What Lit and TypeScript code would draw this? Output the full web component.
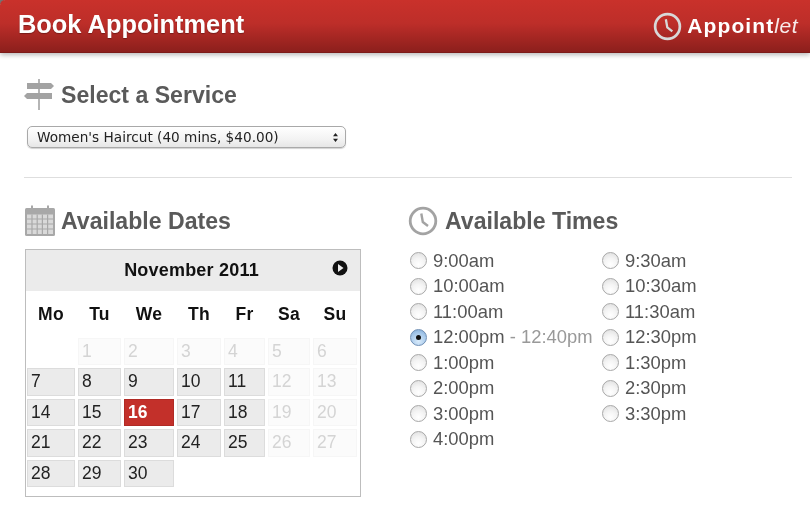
import { LitElement, html, css } from "lit";
import { customElement } from "lit/decorators.js";

const clock = (size: number, color: string) => html`<svg width=${size} height=${size} viewBox="0 0 30 30" fill="none" stroke=${color}>
  <circle cx="15" cy="15" r="12.8" stroke-width="2.8"/>
  <path d="M13.3 7.5 L14.8 16 L20 20" stroke-width="2.4" stroke-linejoin="miter"/>
</svg>`;

const weekdays = ["Mo", "Tu", "We", "Th", "Fr", "Sa", "Su"];
type Day = { n?: number; k: "" | "off" | "on" | "sel" };
const days: Day[] = [
  { k: "" },
  ...[1, 2, 3, 4, 5, 6].map((n) => ({ n, k: "off" as const })),
  ...[7, 8, 9, 10, 11].map((n) => ({ n, k: "on" as const })),
  ...[12, 13].map((n) => ({ n, k: "off" as const })),
  ...[14, 15].map((n) => ({ n, k: "on" as const })),
  { n: 16, k: "sel" },
  ...[17, 18].map((n) => ({ n, k: "on" as const })),
  ...[19, 20].map((n) => ({ n, k: "off" as const })),
  ...[21, 22, 23, 24, 25].map((n) => ({ n, k: "on" as const })),
  ...[26, 27].map((n) => ({ n, k: "off" as const })),
  ...[28, 29, 30].map((n) => ({ n, k: "on" as const })),
];

const times: [string, string?, boolean?][] = [
  ["9:00am"], ["9:30am"],
  ["10:00am"], ["10:30am"],
  ["11:00am"], ["11:30am"],
  ["12:00pm", " - 12:40pm", true], ["12:30pm"],
  ["1:00pm"], ["1:30pm"],
  ["2:00pm"], ["2:30pm"],
  ["3:00pm"], ["3:30pm"],
  ["4:00pm"],
];

@customElement("app-root")
export class AppRoot extends LitElement {
  static styles = css`
    :host {
      display: block;
      width: 810px;
      height: 530px;
      overflow: hidden;
      background: linear-gradient(135deg, #777 3px, #fff 3px);
      font-family: "Liberation Sans", Arial, sans-serif;
      filter: blur(0.45px);
    }
    .top {
      height: 53px;
      box-sizing: border-box;
      background: linear-gradient(#c9312b 0%, #bd2e29 45%, #8c1f1c 100%);
      border-bottom: 1px solid #7c1b18;
      box-shadow: 0 2px 5px rgba(0, 0, 0, 0.28);
      border-top-left-radius: 5px;
      display: flex;
      align-items: center;
      justify-content: space-between;
      padding: 0 12px 3px 18px;
      color: #fff;
    }
    .top h1 {
      margin: 0;
      font-size: 25.4px;
      font-weight: 700;
      text-shadow: 0 1px 1px rgba(0, 0, 0, 0.3);
    }
    .brand {
      display: flex;
      align-items: center;
      gap: 5px;
      font-size: 21px;
      font-weight: 700;
      letter-spacing: 1.1px;
      margin-top: 3px;
    }
    .brand i {
      font-weight: 400;
      letter-spacing: 0.5px;
      opacity: 0.9;
    }
    .content {
      padding: 26px 18px 0 24px;
    }
    h2 {
      margin: 0;
      display: flex;
      align-items: center;
      font-size: 23.1px;
      font-weight: 700;
      color: #5a5a5a;
    }
    .service h2 {
      gap: 6px;
      height: 32px;
    }
    .select {
      margin: 15px 0 0 3px;
      width: 319px;
      height: 22px;
      box-sizing: border-box;
      border: 1px solid #a9a9a9;
      border-radius: 5px;
      background: linear-gradient(#fff, #f3f3f3 60%, #e6e6e6);
      box-shadow: 0 1px 1px rgba(0, 0, 0, 0.18);
      display: flex;
      align-items: center;
      justify-content: space-between;
      padding: 0 6px 0 9px;
      font-family: "DejaVu Sans", sans-serif;
      font-size: 13.65px;
      color: #222;
    }
    hr {
      margin: 29px 0 0;
      border: 0;
      height: 1px;
      background: #dedede;
    }
    .cols {
      display: grid;
      grid-template-columns: 385px 1fr;
      margin-top: 27px;
    }
    .dates h2 {
      gap: 5px;
      height: 32px;
    }
    .cal {
      margin: 11.5px 0 0 1px;
      width: 336px;
      height: 248px;
      box-sizing: border-box;
      border: 1px solid #bdbdbd;
    }
    .cal-head {
      height: 41px;
      background: #ebebeb;
      position: relative;
      display: flex;
      align-items: center;
      justify-content: center;
      padding-right: 3px;
      font-size: 18px;
      font-weight: 700;
      color: #111;
      letter-spacing: 0.2px;
    }
    .next {
      position: absolute;
      right: 12px;
      top: 10px;
    }
    .grid {
      display: grid;
      grid-template-columns: 48px 43px 50px 44px 41px 42px 44px;
      column-gap: 3px;
      padding: 0 1px;
    }
    .wd {
      height: 47px;
      display: flex;
      align-items: center;
      justify-content: center;
      font-size: 17.5px;
      font-weight: 700;
      color: #111;
      letter-spacing: 0.3px;
    }
    .rows {
      grid-auto-rows: 27.5px;
      row-gap: 3px;
    }
    .d {
      box-sizing: border-box;
      display: flex;
      align-items: center;
      padding-left: 3px;
      font-size: 17.5px;
    }
    .on {
      background: #ebebeb;
      border: 1px solid #dcdcdc;
      color: #222;
    }
    .off {
      background: #fbfbfb;
      border: 1px solid #f6f6f6;
      color: #d4d4d4;
    }
    .sel {
      background: #c3302a;
      border: 1px solid #b02a25;
      color: #fff;
      font-weight: 700;
    }
    .times h2 {
      gap: 7px;
      height: 32px;
      margin-left: -1px;
    }
    .slots {
      margin: 11px 0 0 1px;
      display: grid;
      grid-template-columns: 192px 1fr;
      grid-auto-rows: 25.5px;
      font-size: 18.4px;
      color: #555;
    }
    .slot {
      display: flex;
      align-items: center;
      gap: 6px;
      white-space: pre;
    }
    .radio {
      width: 17px;
      height: 17px;
      box-sizing: border-box;
      flex: none;
      border-radius: 50%;
      border: 1px solid #a8a8a8;
      background: radial-gradient(circle at 50% 75%, #fff 0%, #f4f4f4 45%, #dcdcdc 100%);
      display: flex;
      align-items: center;
      justify-content: center;
    }
    .radio.checked {
      border-color: #6f8fb5;
      background: radial-gradient(circle at 50% 75%, #d9ebfb 0%, #a6c8ea 60%, #7ea9d6 100%);
    }
    .radio.checked::after {
      content: "";
      width: 5px;
      height: 5px;
      border-radius: 50%;
      background: #111;
    }
    .end {
      color: #999;
    }
  `;

  render() {
    return html`
      <header class="top">
        <h1>Book Appointment</h1>
        <div class="brand">
          ${clock(29, "#d8d8d8")}
          <span>Appoint<i>let</i></span>
        </div>
      </header>
      <main class="content">
        <section class="service">
          <h2>
            <svg width="31" height="32" viewBox="0 0 31 32" fill="#a3a3a3">
              <rect x="14.2" y="0" width="1.6" height="31" />
              <path d="M3 4 H27 L30 7 L27 10 H3 Z" />
              <path d="M28 14 H3 L0 17 L3 20 H28 Z" />
            </svg>
            Select a Service
          </h2>
          <div class="select">
            <span>Women's Haircut (40 mins, $40.00)</span>
            <svg width="7" height="11" viewBox="0 0 7 11" fill="#222">
              <path d="M3.5 1 L6 4.2 H1 Z M3.5 10 L6 6.8 H1 Z" />
            </svg>
          </div>
        </section>
        <hr />
        <div class="cols">
          <section class="dates">
            <h2>
              <svg width="32" height="32" viewBox="0 0 32 32">
                <rect x="1" y="3" width="30" height="28" rx="1.5" fill="#a8a8a8" />
                <rect x="7" y="0.5" width="2" height="5" fill="#a8a8a8" />
                <rect x="23" y="0.5" width="2" height="5" fill="#a8a8a8" />
                <path d="M3 9.5 H29 V29 H3 Z" fill="#d9d9d9" />
                <path d="M3 14 H29 M3 19 H29 M3 24 H29 M8 9.5 V29 M13.2 9.5 V29 M18.4 9.5 V29 M23.6 9.5 V29" stroke="#a8a8a8" stroke-width="1.2" fill="none" />
              </svg>
              Available Dates
            </h2>
            <div class="cal">
              <div class="cal-head">
                November 2011
                <svg class="next" width="16" height="16" viewBox="0 0 16 16">
                  <circle cx="8" cy="8" r="7.5" fill="#111" />
                  <path d="M6 4 L11.5 8 L6 12 Z" fill="#eee" />
                </svg>
              </div>
              <div class="grid">
                ${weekdays.map((w) => html`<div class="wd">${w}</div>`)}
              </div>
              <div class="grid rows">
                ${days.map((d) => html`<div class="d ${d.k}">${d.n ?? ""}</div>`)}
              </div>
            </div>
          </section>
          <section class="times">
            <h2>${clock(30, "#a3a3a3")} Available Times</h2>
            <div class="slots">
              ${times.map(
                ([t, end, checked]) => html`<div class="slot">
                  <span class="radio ${checked ? "checked" : ""}"></span>
                  <span>${t}${end ? html`<span class="end">${end}</span>` : ""}</span>
                </div>`
              )}
            </div>
          </section>
        </div>
      </main>
    `;
  }
}
